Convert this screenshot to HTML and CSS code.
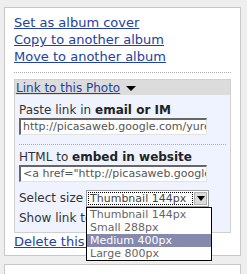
FILE: index.html
```html
<!DOCTYPE html>
<html>
<head>
<meta charset="utf-8">
<link rel="stylesheet" href="styles.css">
</head>
<body>
<div class="card">
  <div class="actions">
    <a class="act" href="#">Set as album cover</a>
    <a class="act" href="#">Copy to another album</a>
    <a class="act" href="#">Move to another album</a>
  </div>
  <div class="linkbox">
    <div class="lb-head"><a class="lb-title" href="#">Link to this Photo</a><span class="tri"></span></div>
    <div class="lb-body">
      <div class="label first">Paste link in <b>email or IM</b></div>
      <div class="field">http://picasaweb.google.com/yurenju/Photos#5100000000000000000</div>
      <div class="sep"></div>
      <div class="label">HTML to <b>embed in website</b></div>
      <div class="field">&lt;a href="http://picasaweb.google.com/yurenju/Photos"&gt;</div>
      <div class="size-row">
        <span class="size-label">Select size</span>
        <div class="select-wrap">
          <div class="select">
            <span class="sel-text">Thumbnail 144px</span>
            <span class="sel-btn"><span class="sel-tri"></span></span>
          </div>
          <ul class="dropdown">
            <li class="opt">Thumbnail 144px</li>
            <li class="opt">Small 288px</li>
            <li class="opt active">Medium 400px</li>
            <li class="opt">Large 800px</li>
          </ul>
        </div>
      </div>
      <div class="label show">Show link to this photo</div>
    </div>
  </div>
  <a class="act delete" href="#">Delete this photo</a>
</div>
<div class="card next"></div>
</body>
</html>
```
FILE: styles.css
```css
html, body {
  margin: 0;
  overflow: hidden;
}
body {
  padding: 7px 6px 0 4px;
  background: #eeeeee;
  font-family: "DejaVu Sans", Verdana, sans-serif;
  color: #333;
}
.card {
  background: #fff;
  border: 1px solid #c8c8c8;
  padding: 6px 9px 5px 9px;
}
.card.next {
  margin-top: 8px;
  height: 40px;
}
.actions {
  display: flex;
  flex-direction: column;
  padding-bottom: 7px;
  border-bottom: 1px dotted #aaa;
  margin-bottom: 6px;
}
.act {
  font-size: 13px;
  line-height: 17px;
  color: #23419e;
  text-decoration: underline;
}
.linkbox {
  border: 1px solid #cfcfcf;
  background: #eef3ff;
}
.lb-head {
  display: flex;
  align-items: center;
  height: 15px;
  background: #dcdcdc;
  padding-left: 1px;
}
.lb-title {
  font-size: 12px;
  line-height: 14px;
  color: #23419e;
  text-decoration: underline;
}
.tri {
  width: 0;
  height: 0;
  margin-left: 6px;
  margin-top: 1px;
  border-left: 5px solid transparent;
  border-right: 5px solid transparent;
  border-top: 5px solid #000;
}
.lb-body {
  padding: 8px 4px 6px 4px;
}
.label {
  font-size: 12px;
  line-height: 15px;
  color: #333;
  white-space: nowrap;
}
.label b {
  color: #222;
}
.field {
  width: 183px;
  height: 14px;
  border-top: 2px solid #666;
  border-left: 2px solid #666;
  border-right: 1px solid #e2e2e2;
  border-bottom: 1px solid #e2e2e2;
  background: #fff;
  padding: 0 0 0 2px;
  font-size: 11px;
  line-height: 14px;
  color: #555;
  white-space: nowrap;
  overflow: hidden;
}
.sep {
  border-top: 1px dotted #aaa;
  margin: 9px 0 5px 0;
}
.size-row {
  display: flex;
  align-items: center;
  margin-top: 8px;
}
.size-label {
  width: 67px;
  font-size: 12px;
  line-height: 15px;
  color: #333;
}
.select-wrap {
  position: relative;
}
.select {
  display: flex;
  width: 119px;
  height: 13px;
  border: 1px solid #9a9a9a;
  padding: 1px;
  background: #fff;
}
.sel-text {
  flex: 1;
  border: 1px dotted #000;
  padding-left: 1px;
  font-size: 11px;
  line-height: 11px;
  color: #444;
  white-space: nowrap;
  overflow: hidden;
}
.sel-btn {
  width: 11px;
  margin-left: 1px;
  background: #dcdcdc;
  border: 1px solid #b0b0b0;
  display: flex;
  align-items: center;
  justify-content: center;
}
.sel-tri {
  width: 0;
  height: 0;
  border-left: 4px solid transparent;
  border-right: 4px solid transparent;
  border-top: 5px solid #000;
}
.dropdown {
  position: absolute;
  left: 0;
  top: 17px;
  width: 124px;
  margin: 0;
  padding: 0;
  list-style: none;
  background: #fff;
  border: 1px solid #000;
  z-index: 5;
}
.opt {
  height: 13px;
  padding-left: 3px;
  font-size: 11px;
  line-height: 13px;
  color: #666;
  white-space: nowrap;
}
.opt.active {
  background: #8489ad;
  color: #fff;
}
.show {
  margin-top: 4px;
}
.delete {
  display: block;
}
```
